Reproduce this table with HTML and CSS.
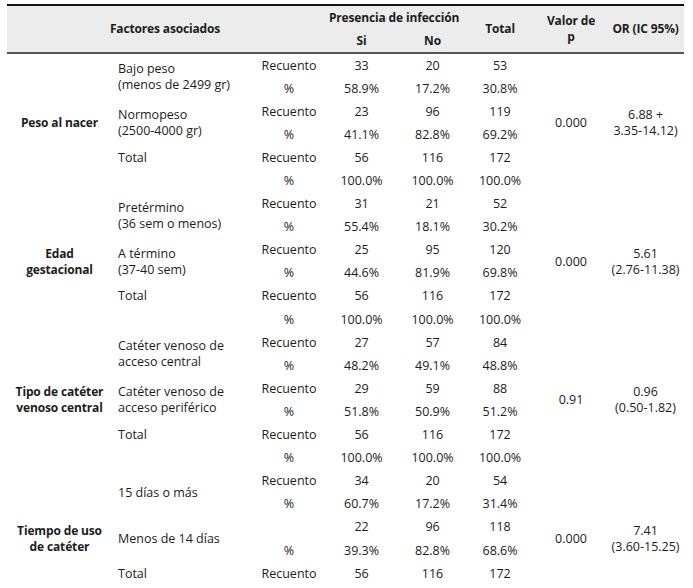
FILE: index.html
```html
<!DOCTYPE html>
<html lang="es">
<head>
<meta charset="utf-8">
<title>Factores asociados</title>
<link rel="stylesheet" href="styles.css">
</head>
<body>
<table class="tbl">
  <colgroup>
    <col class="c-group"><col class="c-sub"><col class="c-kind"><col class="c-si"><col class="c-no"><col class="c-tot"><col class="c-p"><col class="c-or">
  </colgroup>
  <thead>
    <tr class="h1">
      <th colspan="3" rowspan="2">Factores asociados</th>
      <th colspan="2">Presencia de infección</th>
      <th rowspan="2">Total</th>
      <th rowspan="2">Valor de<br>p</th>
      <th rowspan="2">OR (IC 95%)</th>
    </tr>
    <tr class="h2">
      <th>Si</th>
      <th>No</th>
    </tr>
  </thead>
  <tbody>
    <tr><th class="grp" rowspan="6">Peso al nacer</th><td class="sub" rowspan="2">Bajo peso<br>(menos de 2499 gr)</td><td>Recuento</td><td>33</td><td>20</td><td>53</td><td class="pv" rowspan="6">0.000</td><td class="or" rowspan="6">6.88 +<br>3.35-14.12)</td></tr>
    <tr><td>%</td><td>58.9%</td><td>17.2%</td><td>30.8%</td></tr>
    <tr><td class="sub" rowspan="2">Normopeso<br>(2500-4000 gr)</td><td>Recuento</td><td>23</td><td>96</td><td>119</td></tr>
    <tr><td>%</td><td>41.1%</td><td>82.8%</td><td>69.2%</td></tr>
    <tr><td class="sub">Total</td><td>Recuento</td><td>56</td><td>116</td><td>172</td></tr>
    <tr><td class="sub"></td><td>%</td><td>100.0%</td><td>100.0%</td><td>100.0%</td></tr>

    <tr><th class="grp" rowspan="6">Edad<br>gestacional</th><td class="sub" rowspan="2">Pretérmino<br>(36 sem o menos)</td><td>Recuento</td><td>31</td><td>21</td><td>52</td><td class="pv" rowspan="6">0.000</td><td class="or" rowspan="6">5.61<br>(2.76-11.38)</td></tr>
    <tr><td>%</td><td>55.4%</td><td>18.1%</td><td>30.2%</td></tr>
    <tr><td class="sub" rowspan="2">A término<br>(37-40 sem)</td><td>Recuento</td><td>25</td><td>95</td><td>120</td></tr>
    <tr><td>%</td><td>44.6%</td><td>81.9%</td><td>69.8%</td></tr>
    <tr><td class="sub">Total</td><td>Recuento</td><td>56</td><td>116</td><td>172</td></tr>
    <tr><td class="sub"></td><td>%</td><td>100.0%</td><td>100.0%</td><td>100.0%</td></tr>

    <tr><th class="grp" rowspan="6">Tipo de catéter<br>venoso central</th><td class="sub" rowspan="2">Catéter venoso de<br>acceso central</td><td>Recuento</td><td>27</td><td>57</td><td>84</td><td class="pv" rowspan="6">0.91</td><td class="or" rowspan="6">0.96<br>(0.50-1.82)</td></tr>
    <tr><td>%</td><td>48.2%</td><td>49.1%</td><td>48.8%</td></tr>
    <tr><td class="sub" rowspan="2">Catéter venoso de<br>acceso periférico</td><td>Recuento</td><td>29</td><td>59</td><td>88</td></tr>
    <tr><td>%</td><td>51.8%</td><td>50.9%</td><td>51.2%</td></tr>
    <tr><td class="sub">Total</td><td>Recuento</td><td>56</td><td>116</td><td>172</td></tr>
    <tr><td class="sub"></td><td>%</td><td>100.0%</td><td>100.0%</td><td>100.0%</td></tr>

    <tr><th class="grp" rowspan="6">Tiempo de uso<br>de catéter</th><td class="sub" rowspan="2">15 días o más</td><td>Recuento</td><td>34</td><td>20</td><td>54</td><td class="pv" rowspan="6">0.000</td><td class="or" rowspan="6">7.41<br>(3.60-15.25)</td></tr>
    <tr><td>%</td><td>60.7%</td><td>17.2%</td><td>31.4%</td></tr>
    <tr><td class="sub" rowspan="2">Menos de 14 días</td><td></td><td>22</td><td>96</td><td>118</td></tr>
    <tr><td>%</td><td>39.3%</td><td>82.8%</td><td>68.6%</td></tr>
    <tr><td class="sub">Total</td><td>Recuento</td><td>56</td><td>116</td><td>172</td></tr>
    <tr class="last"><td class="sub"></td><td>%</td><td>100.0%</td><td>100.0%</td><td>100.0%</td></tr>
  </tbody>
</table>
</body>
</html>
```

FILE: styles.css
```css
html, body {
  margin: 0;
  padding: 0;
  background: #ffffff;
}
body {
  font-family: "Open Sans", "Noto Sans", sans-serif;
  font-size: 12.5px;
  color: #1c1c1c;
}
.tbl {
  margin: 4px 0 0 7px;
  width: 677px;
  border-collapse: collapse;
  table-layout: fixed;
}
.c-group { width: 105px; }
.c-sub { width: 143px; }
.c-kind { width: 68px; }
.c-si { width: 77px; }
.c-no { width: 65px; }
.c-tot { width: 70px; }
.c-p { width: 72px; }
.c-or { width: 77px; }

.tbl thead th {
  background: #ececec;
  font-weight: 700;
  font-size: 12px;
  letter-spacing: -0.15px;
  line-height: 16px;
  padding: 0;
  text-align: center;
  vertical-align: middle;
}
.tbl thead tr.h1 th {
  border-top: 2px solid #111111;
  height: 24px;
}
.tbl thead tr.h2 th {
  height: 22px;
}
.tbl thead tr.h1 th[rowspan="2"],
.tbl thead tr.h2 th {
  border-bottom: 2px solid #555555;
}
.tbl tbody td,
.tbl tbody th {
  padding: 0;
  height: 23.1px;
  line-height: 16px;
  text-align: center;
  vertical-align: middle;
  white-space: nowrap;
}
.tbl tbody th.grp {
  font-weight: 700;
  font-size: 12px;
  letter-spacing: -0.15px;
}
.tbl tbody td.sub {
  text-align: left;
  padding-left: 6px;
}
.tbl tbody tr.last td {
  vertical-align: bottom;
  line-height: 12px;
}
```
